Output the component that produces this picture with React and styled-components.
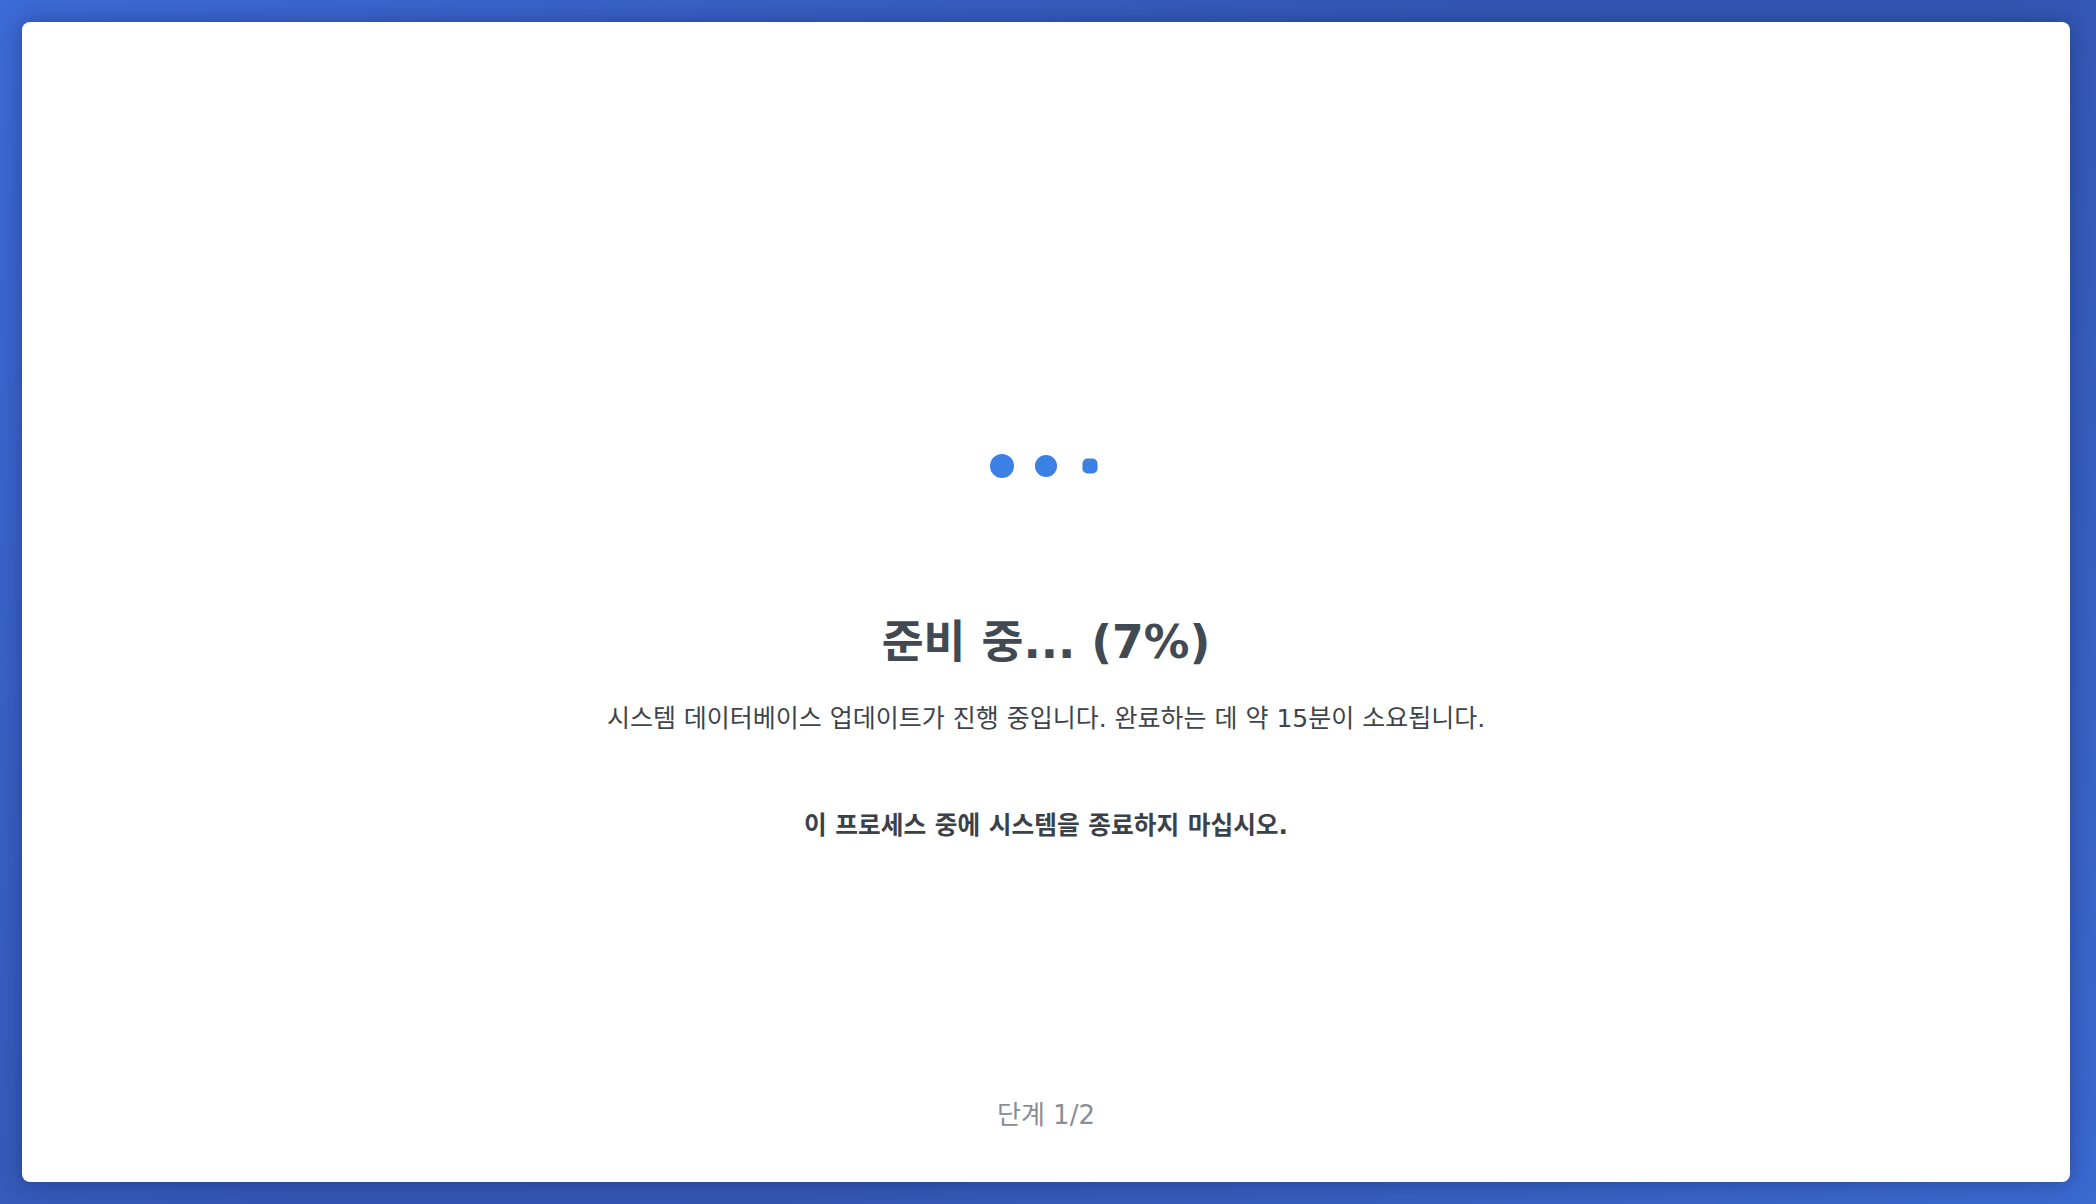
import styled, { createGlobalStyle } from "styled-components";

const GlobalStyle = createGlobalStyle`
  html, body {
    margin: 0;
    padding: 0;
    height: 100%;
  }
  body {
    font-family: "DejaVu Sans", "Noto Sans CJK KR", sans-serif;
  }
  #root {
    height: 100%;
  }
`;

const Screen = styled.div`
  box-sizing: border-box;
  height: 100vh;
  padding: 22px 26px 22px 22px;
  background: linear-gradient(135deg, #3d6ad6 0%, #3357b4 45%, #3357b2 60%, #3b69d0 100%);
  display: flex;
`;

const Card = styled.div`
  flex: 1;
  background: #fff;
  border-radius: 8px;
  box-shadow: 0 0 22px rgba(18, 32, 90, 0.45);
  display: flex;
  flex-direction: column;
  align-items: center;
  padding-top: 432px;
  padding-bottom: 51px;
  box-sizing: border-box;
`;

const Dots = styled.div`
  display: flex;
  align-items: center;
  gap: 20px;
  height: 24px;
`;

const Dot = styled.span`
  width: 24px;
  height: 24px;
  border-radius: ${(p) => p.$radius};
  background: #3b80e4;
  transform: scale(${(p) => p.$scale});
`;

const Title = styled.h1`
  margin: 138px 0 0;
  font-size: 45.6px;
  font-weight: bold;
  line-height: 1.2;
  color: #414952;
`;

const Message = styled.p`
  margin: ${(p) => p.$top} 0 0;
  font-size: ${(p) => (p.$strong ? "24.7px" : "25px")};
  line-height: 1.4;
  font-weight: ${(p) => (p.$strong ? "bold" : "normal")};
  color: ${(p) => (p.$strong ? "#3b4148" : "#3e444a")};
`;

const Step = styled.div`
  margin-top: auto;
  font-size: 26px;
  color: #8a8f95;
`;

const dots = [
  { scale: 1, radius: "50%" },
  { scale: 0.92, radius: "50%" },
  { scale: 0.63, radius: "8px" },
];

export default function App() {
  return (
    <>
      <GlobalStyle />
      <Screen>
        <Card>
          <Dots>
            {dots.map((d, i) => (
              <Dot key={i} $scale={d.scale} $radius={d.radius} />
            ))}
          </Dots>
          <Title>준비 중... (7%)</Title>
          <Message $top="30px">
            시스템 데이터베이스 업데이트가 진행 중입니다. 완료하는 데 약 15분이 소요됩니다.
          </Message>
          <Message $top="73px" $strong>
            이 프로세스 중에 시스템을 종료하지 마십시오.
          </Message>
          <Step>단계 1/2</Step>
        </Card>
      </Screen>
    </>
  );
}
